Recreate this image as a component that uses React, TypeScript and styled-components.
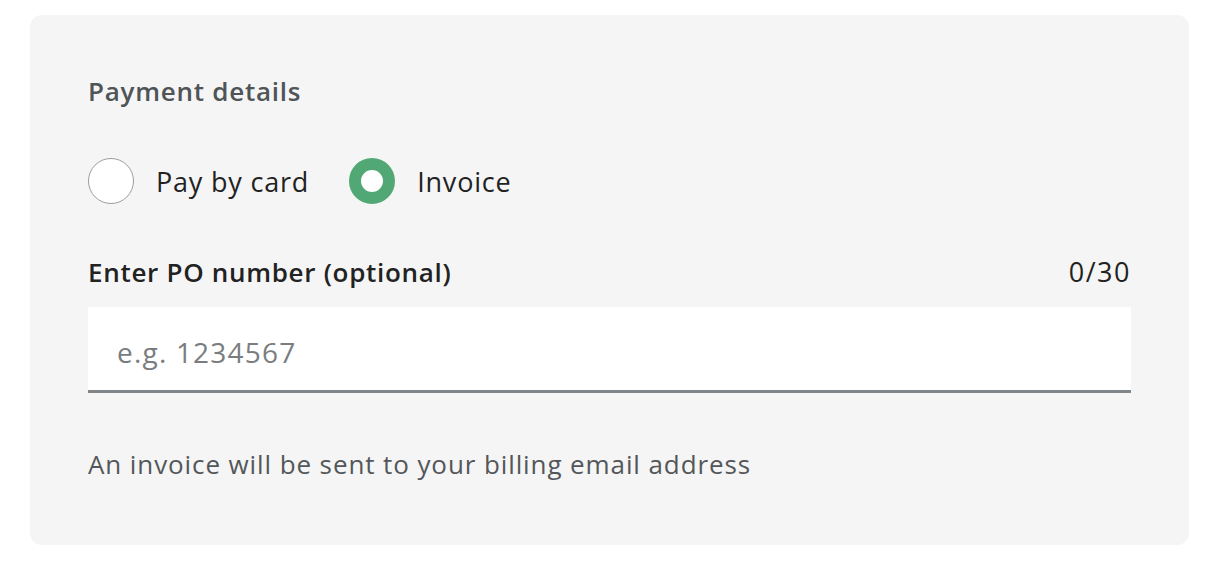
import React, { useState } from "react";
import styled, { createGlobalStyle } from "styled-components";

const GlobalStyle = createGlobalStyle`
  body {
    margin: 0;
    background: #ffffff;
    font-family: "Open Sans", "Liberation Sans", sans-serif;
  }
`;

const Card = styled.section`
  margin: 15px 35px 0 30px;
  padding: 60px 58px 65px 58px;
  background: #f5f5f5;
  border-radius: 12px;
  display: flex;
  flex-direction: column;
`;

const Title = styled.h2`
  margin: 0;
  font-size: 26px;
  line-height: 32px;
  font-weight: 600;
  letter-spacing: 0.75px;
  color: #4f5457;
`;

const RadioGroup = styled.div`
  display: flex;
  align-items: center;
  gap: 40px;
  margin-top: 51px;
`;

const RadioOption = styled.label`
  display: flex;
  align-items: center;
  gap: 22px;
  cursor: pointer;
  font-size: 27px;
  letter-spacing: 0.8px;
  color: #222;
`;

const RadioDot = styled.span<{ $checked: boolean }>`
  box-sizing: border-box;
  width: 46px;
  height: 46px;
  border-radius: 50%;
  background: #fff;
  border: ${(p) => (p.$checked ? "12px solid #52a874" : "1px solid #9a9da0")};
`;

const LabelRow = styled.div`
  display: flex;
  justify-content: space-between;
  align-items: center;
  margin-top: 52px;
  line-height: 32px;
`;

const FieldLabel = styled.span`
  font-size: 26px;
  font-weight: 600;
  letter-spacing: 0.7px;
  color: #222;
`;

const Counter = styled.span`
  font-size: 27px;
  letter-spacing: 1.5px;
  color: #222;
`;

const Input = styled.input`
  box-sizing: border-box;
  margin-top: 19px;
  height: 86px;
  width: 100%;
  border: none;
  border-bottom: 3px solid #808589;
  background: #fff;
  padding: 6px 29px 0;
  font-family: inherit;
  font-size: 28px;
  letter-spacing: 1.2px;
  color: #222;
  outline: none;

  &::placeholder {
    color: #7a7d80;
  }
`;

const Helper = styled.p`
  margin: 55px 0 0;
  font-size: 26px;
  line-height: 32px;
  letter-spacing: 0.9px;
  color: #53575a;
`;

export default function App() {
  const [method, setMethod] = useState<"card" | "invoice">("invoice");
  const [po, setPo] = useState("");

  return (
    <>
      <GlobalStyle />
      <Card>
        <Title>Payment details</Title>
        <RadioGroup>
          <RadioOption onClick={() => setMethod("card")}>
            <RadioDot $checked={method === "card"} />
            Pay by card
          </RadioOption>
          <RadioOption onClick={() => setMethod("invoice")}>
            <RadioDot $checked={method === "invoice"} />
            Invoice
          </RadioOption>
        </RadioGroup>
        <LabelRow>
          <FieldLabel>Enter PO number (optional)</FieldLabel>
          <Counter>{po.length}/30</Counter>
        </LabelRow>
        <Input
          value={po}
          maxLength={30}
          placeholder="e.g. 1234567"
          onChange={(e) => setPo(e.target.value)}
        />
        <Helper>An invoice will be sent to your billing email address</Helper>
      </Card>
    </>
  );
}
